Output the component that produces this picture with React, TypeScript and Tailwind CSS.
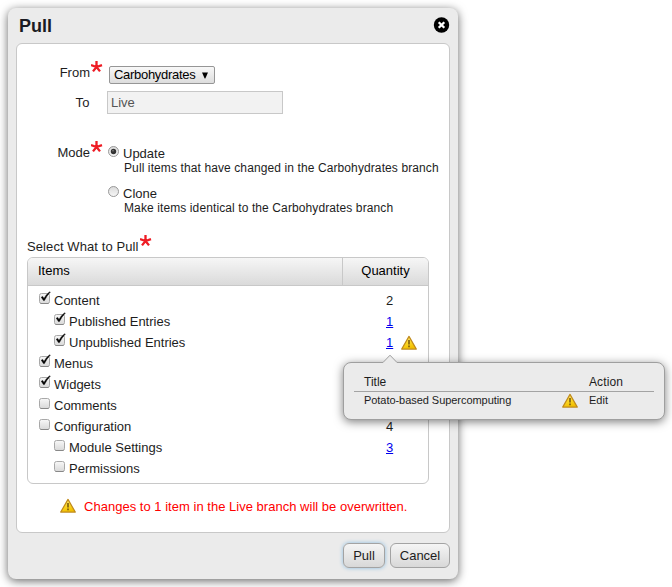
import React from "react";

function Star({ className = "" }: { className?: string }) {
  return (
    <svg className={`block shrink-0 ${className}`} width="12" height="12" viewBox="0 0 12 12" fill="none" stroke="#ee1c24" strokeWidth="2.3">
      <path d="M5.500 6V0M5.500 6L0 4.100M5.500 6L11 4.100M5.500 6L2 10.400M5.500 6L9 10.400" />
    </svg>
  );
}

function Warning({ className = "" }: { className?: string }) {
  return (
    <svg className={`block shrink-0 ${className}`} width="16" height="15" viewBox="0 0 16 15">
      <defs>
        <linearGradient id="warn" x1="0" y1="0" x2="0.3" y2="1">
          <stop offset="0" stopColor="#fff08a" />
          <stop offset="0.55" stopColor="#fbd82a" />
          <stop offset="1" stopColor="#f2c000" />
        </linearGradient>
      </defs>
      <path d="M8 1.400L15.3 14.100H0.7Z" fill="url(#warn)" stroke="#c08a1c" strokeWidth="1.2" strokeLinejoin="round" />
      <path d="M8 5V9.500M8 10.600V12.200" stroke="#7a5a10" strokeWidth="1.6" />
    </svg>
  );
}

function Check({ checked }: { checked?: boolean }) {
  return (
    <svg className="mt-px block shrink-0" width="15" height="14" viewBox="0 0 15 14">
      <defs>
        <linearGradient id="box" x1="0" y1="0" x2="0" y2="1">
          <stop offset="0" stopColor="#f8f8f8" />
          <stop offset="1" stopColor="#d8d8d8" />
        </linearGradient>
      </defs>
      <rect x="0.5" y="2.500" width="10" height="10" rx="2" fill="url(#box)" stroke="#a8a8a8" />
      <path d="M1.5 12.5H9.5" stroke="#888" />
      {checked && <path d="M2.3 6.2L3.6 5.4L5 7.5Q7 3.5 10.4 0.900L11.300 1.100Q7.600 5 5.400 9.600H4.500Z" fill="#000" stroke="#000" strokeWidth="0.5" />}
    </svg>
  );
}

function Radio({ checked }: { checked?: boolean }) {
  return (
    <svg className="block shrink-0" width="12" height="12" viewBox="0 0 12 12">
      <defs>
        <linearGradient id="dial" x1="0" y1="0" x2="0" y2="1">
          <stop offset="0" stopColor="#d9d9d9" />
          <stop offset="1" stopColor="#f8f8f8" />
        </linearGradient>
      </defs>
      <circle cx="5.500" cy="5.500" r="5" fill="url(#dial)" stroke="#999" />
      {checked && <circle cx="5.500" cy="5.500" r="2.700" fill="#333" />}
      {checked && <circle cx="5" cy="4.700" r="0.800" fill="#888" />}
    </svg>
  );
}

const rows = [
  { name: "Content", checked: true, qty: "2" },
  { name: "Published Entries", child: true, checked: true, qty: "1", link: true },
  { name: "Unpublished Entries", child: true, checked: true, qty: "1", link: true, warn: true },
  { name: "Menus", checked: true },
  { name: "Widgets", checked: true },
  { name: "Comments" },
  { name: "Configuration", qty: "4" },
  { name: "Module Settings", child: true, qty: "3", link: true },
  { name: "Permissions", child: true },
];

function Mode({ title, text, checked }: { title: string; text: string; checked?: boolean }) {
  return (
    <div className="flex h-10">
      <Radio checked={checked} />
      <div className="ml-[3px] leading-[15px]">
        <div>{title}</div>
        <div className="ml-px text-[12px] leading-[14px] tracking-[0.105px] whitespace-nowrap">{text}</div>
      </div>
    </div>
  );
}

function Popover() {
  return (
    <div className="absolute top-[362px] left-[343px] h-[58px] w-[322px] rounded-lg border border-[#9f9f9f] bg-[#ebebeb] px-[10px] pt-[11px] shadow-[0_2px_10px_rgba(0,0,0,0.5)]">
      <svg className="absolute -top-[9px] left-[38px]" width="16" height="10" viewBox="0 0 16 10">
        <path d="M0.500 9L8 1.200L15.500 9V10H0.500Z" fill="#ebebeb" />
        <path d="M0 8.500H1L8 1.200L15 8.500H16" fill="none" stroke="#9f9f9f" />
      </svg>
      <div className="flex h-[18px] border-b border-[#a3a3a3] pl-[10px] text-[12px] leading-[17px]">
        <div className="w-[225px]">Title</div>
        <div className="tracking-[0.1px]">Action</div>
      </div>
      <div className="flex pt-px pl-[10px] text-[11px] leading-[15px]">
        <div className="w-[198px] tracking-[-0.05px]">Potato-based Supercomputing</div>
        <Warning />
        <div className="ml-[11px]">Edit</div>
      </div>
    </div>
  );
}

export default function App() {
  return (
    <div className="relative h-[587px] w-[672px] overflow-hidden bg-white pt-2 pl-2 text-[13px] text-[#1d1d1d] font-['Liberation_Sans',Arial,sans-serif]">
      <div className="flex h-[571px] w-[450px] flex-col rounded-[8px] bg-[#ebebeb] px-2 shadow-[0_2px_10px_rgba(0,0,0,0.6)]">
        <div className="flex h-[35px] shrink-0 justify-between pt-2 pl-[3px]">
          <h1 className="text-[18px] leading-[21px] font-bold text-[#1a1a22]">Pull</h1>
          <svg className="mt-px" width="17" height="16" viewBox="0 0 17 16">
            <circle cx="8.500" cy="8" r="7.700" fill="#000" />
            <path d="M5.700 5.200L11.300 10.800M11.300 5.200L5.700 10.800" stroke="#fff" strokeWidth="2.300" />
          </svg>
        </div>
        <div className="h-[490px] shrink-0 rounded-md border border-[#c8c8c8] bg-white">
          <div className="flex h-[47px] pt-[17px]">
            <div className="mt-1 w-[73px] text-right leading-[15px]">From</div>
            <Star className="ml-px" />
            <div className="mt-[5px] ml-[6px] flex h-[18px] w-[106px] items-center justify-between rounded-[2px] border border-[#969696] bg-linear-to-b from-[#f8f8f8] to-[#dddddd] pr-[5px] pl-1 text-black">
              <span className="tracking-[-0.3px]">Carbohydrates</span>
              <svg width="8" height="7" viewBox="0 0 8 7"><path d="M1 0.500H7L4.300 6.500H3.700Z" /></svg>
            </div>
          </div>
          <div className="flex h-[55px]">
            <div className="mt-1 w-[73px] text-right leading-[15px] tracking-[0.4px]">To</div>
            <div className="ml-[17px] h-[23px] w-[176px] border border-[#c8c8c8] bg-[#f2f2f2] pl-[3px] leading-[21px] text-[#555]">Live</div>
          </div>
          <div className="flex h-[93px]">
            <div className="-mt-px w-[73px] text-right leading-[15px]">Mode</div>
            <Star className="-mt-[5px] ml-px" />
            <div className="ml-[5px]">
              <Mode title="Update" text="Pull items that have changed in the Carbohydrates branch" checked />
              <Mode title="Clone" text="Make items identical to the Carbohydrates branch" />
            </div>
          </div>
          <div className="flex h-[18px] pl-[10px] leading-[15px]">
            <span className="tracking-[0.09px]">Select What to Pull</span>
            <Star className="-mt-1 ml-px" />
          </div>
          <div className="ml-[10px] h-[227px] w-[402px] rounded-md border border-[#c8c8c8]">
            <div className="flex h-7 rounded-t-[5px] border-b border-[#c8c8c8] bg-linear-to-b from-[#f6f6f6] to-[#dadada] leading-[25px] text-black">
              <div className="w-[314px] pl-[10px]">Items</div>
              <div className="flex-1 border-l border-[#c8c8c8] text-center">Quantity</div>
            </div>
            <div className="pt-1 leading-[21px]">
              {rows.map((row) => (
                <div key={row.name} className="flex h-[21px]">
                  <div className={`flex w-[314px] ${row.child ? "pl-[26px]" : "pl-[11px]"}`}>
                    <Check checked={row.checked} />
                    <span>{row.name}</span>
                  </div>
                  <div className="flex flex-1 pl-[44px]">
                    <span className={row.link ? "text-[#0000ee] underline" : ""}>{row.qty}</span>
                    {row.warn && <Warning className="mt-[3px] ml-2" />}
                  </div>
                </div>
              ))}
            </div>
          </div>
          <div className="mt-[14px] flex pl-[43px] leading-[15px] text-[#ff0000]">
            <Warning />
            <span className="ml-2 pt-px tracking-[0.02px]">Changes to 1 item in the Live branch will be overwritten.</span>
          </div>
        </div>
        <div className="flex justify-end gap-[5px] pt-[10px]">
          <button className="h-[25px] w-[42px] rounded-md border border-[#a3a3a3] bg-linear-to-b from-[#f5f5f5] to-[#d8d8d8] leading-[23px] shadow-[0_0_4px_#8abce0]">Pull</button>
          <button className="h-[25px] w-[60px] rounded-md border border-[#a3a3a3] bg-linear-to-b from-[#f5f5f5] to-[#d8d8d8] leading-[23px]">Cancel</button>
        </div>
      </div>
      <Popover />
    </div>
  );
}
